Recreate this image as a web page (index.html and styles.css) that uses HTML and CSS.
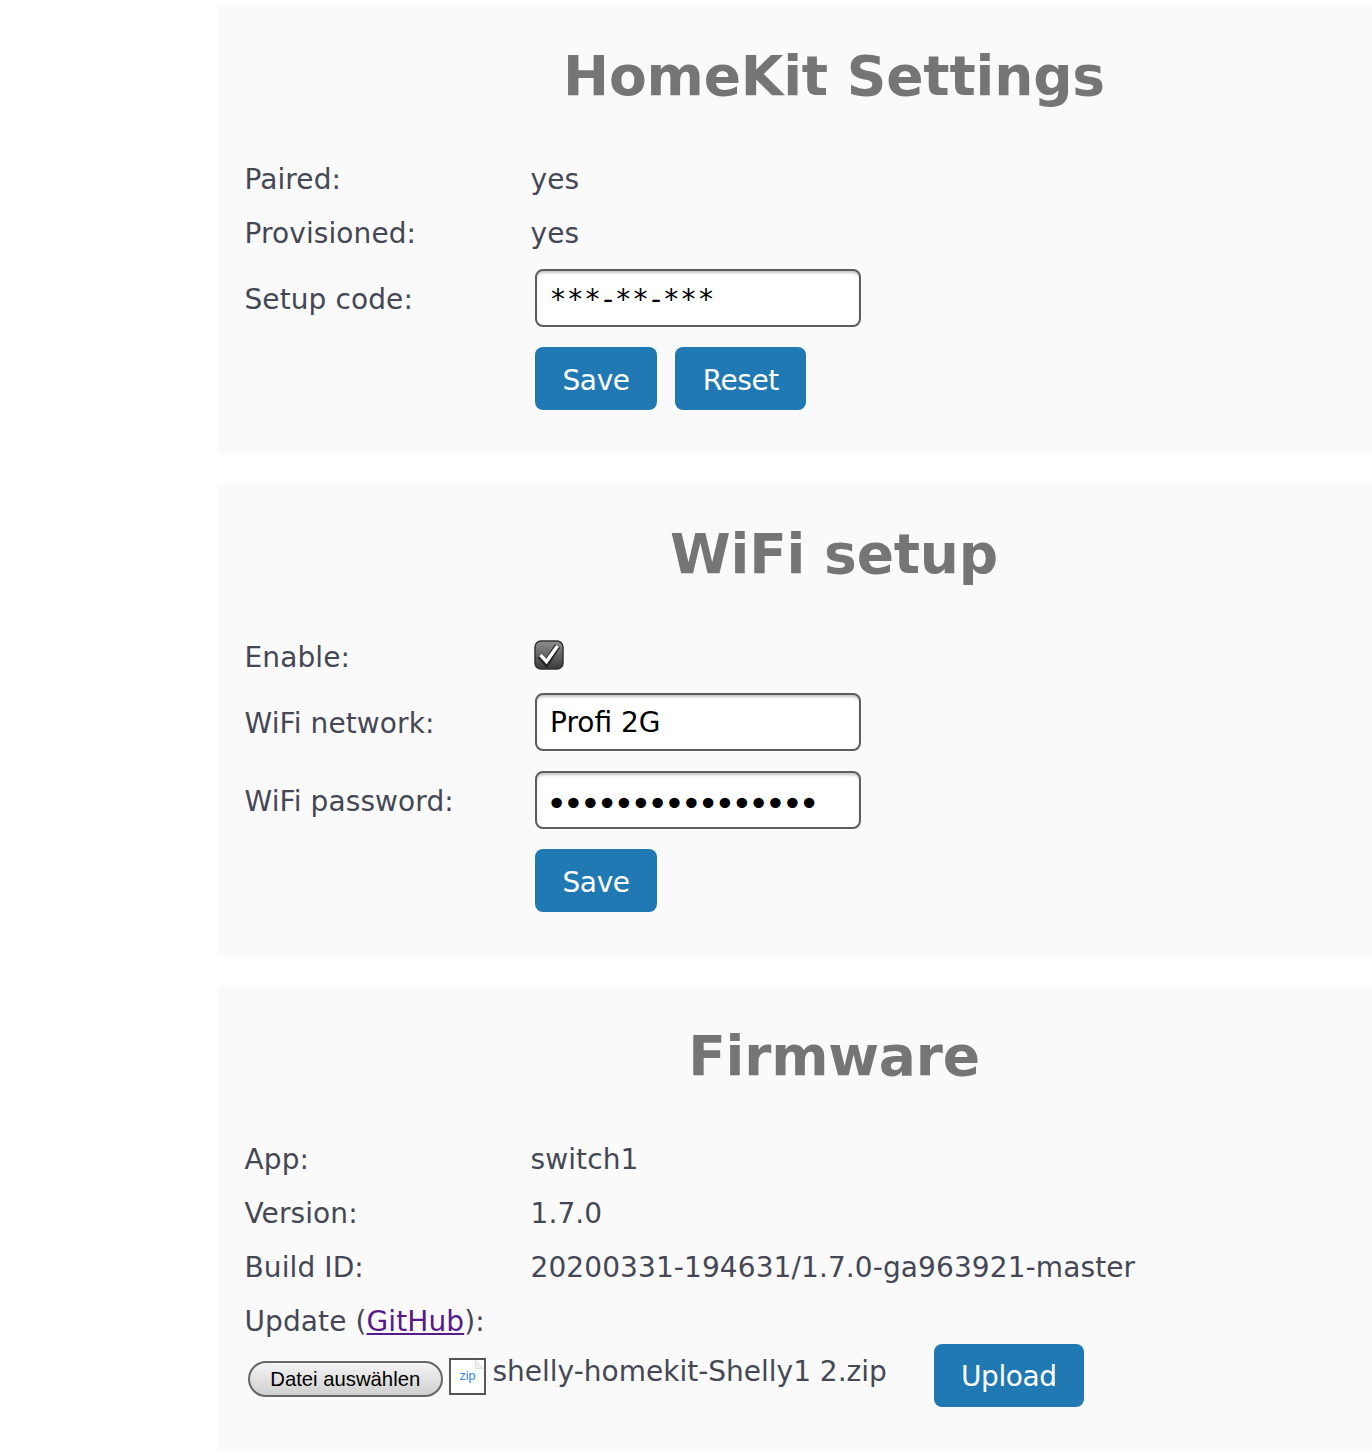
FILE: index.html
```html
<!DOCTYPE html>
<html lang="de">
<head>
<meta charset="utf-8">
<title>Shelly HomeKit</title>
<link rel="stylesheet" href="styles.css">
</head>
<body>
<main class="page">
  <section class="panel panel-homekit">
    <h1>HomeKit Settings</h1>
    <div class="row"><span class="label">Paired:</span><span class="value">yes</span></div>
    <div class="row"><span class="label">Provisioned:</span><span class="value">yes</span></div>
    <div class="row row-input"><span class="label">Setup code:</span><input class="field field-code" type="text" value="***-**-***"></div>
    <div class="actions">
      <button class="btn btn-save" type="button">Save</button>
      <button class="btn btn-reset" type="button">Reset</button>
    </div>
  </section>
  <section class="panel panel-wifi">
    <h1>WiFi setup</h1>
    <div class="row row-check"><span class="label">Enable:</span>
      <svg class="check" width="30" height="30" viewBox="0 0 30 30" aria-hidden="true">
        <defs><linearGradient id="cg" x1="0" y1="0" x2="0" y2="1"><stop offset="0" stop-color="#8f8f8f"/><stop offset="1" stop-color="#3a3a3a"/></linearGradient></defs>
        <rect x="1" y="1" width="28" height="28" rx="6" fill="url(#cg)" stroke="#333" stroke-width="1.5"/>
        <path d="M6 15.5 L12.5 23 L23.5 6" fill="none" stroke="#222" stroke-width="6"/>
        <path d="M6.5 15 L12.5 21.5 L23.5 6" fill="none" stroke="#fff" stroke-width="3.5"/>
      </svg>
    </div>
    <div class="row row-input"><span class="label">WiFi network:</span><input class="field" type="text" value="Profi 2G"></div>
    <div class="row row-input"><span class="label">WiFi password:</span><input class="field field-pass" type="password" value="abcdefghijklmnop"></div>
    <div class="actions">
      <button class="btn btn-save" type="button">Save</button>
    </div>
  </section>
  <section class="panel panel-firmware">
    <h1>Firmware</h1>
    <div class="row"><span class="label">App:</span><span class="value">switch1</span></div>
    <div class="row"><span class="label">Version:</span><span class="value">1.7.0</span></div>
    <div class="row"><span class="label">Build ID:</span><span class="value">20200331-194631/1.7.0-ga963921-master</span></div>
    <div class="row row-update"><span class="label">Update (<a href="#">GitHub</a>):</span></div>
    <div class="upload">
      <button class="file-btn" type="button">Datei auswählen</button>
      <svg class="zip" width="37" height="37" viewBox="0 0 38 38" aria-hidden="true">
        <path d="M1 1 H37 V37 H1 Z" fill="#fff" stroke="#555" stroke-width="2"/>
        <path d="M27 2 L36 11 H27 Z" fill="#eee" stroke="#ddd" stroke-width="1"/>
        <text x="19" y="23" text-anchor="middle" class="zip-text">zip</text>
      </svg>
      <span class="file-name">shelly-homekit-Shelly1 2.zip</span>
      <button class="btn btn-upload" type="button">Upload</button>
    </div>
  </section>
</main>
</body>
</html>
```
FILE: styles.css
```css
html, body {
  margin: 0;
  padding: 0;
  background: #fff;
  overflow: hidden;
  height: 1452px;
}
body {
  font-family: "DejaVu Sans", Verdana, sans-serif;
  font-size: 28px;
  letter-spacing: 0.1px;
  color: #454854;
}
.page {
  width: 1234px;
  margin-left: 217px;
  padding-top: 5px;
  display: flex;
  flex-direction: column;
  gap: 28px;
}
.panel {
  background: #fafafa;
  padding: 0 27.5px;
  box-sizing: border-box;
}
.panel-homekit { height: 450px; }
.panel-wifi { height: 474px; }
.panel-firmware { height: 467px; }
h1 {
  margin: 0;
  padding-top: 35px;
  height: 147px;
  box-sizing: border-box;
  font-size: 55px;
  line-height: 72px;
  letter-spacing: -0.2px;
  font-weight: 700;
  color: #757575;
  text-align: center;
}
.row {
  display: flex;
  align-items: center;
  height: 54px;
}
.label { width: 286px; flex: none; }
a { color: #551a8b; }
.row-input { height: 78px; }
.row-update { padding-top: 1px; height: 53px; margin-bottom: 1px; }
.field {
  box-sizing: border-box;
  width: 326px;
  height: 58px;
  margin: -3px 0 0 4.5px;
  padding: 2px 13px 0;
  font: inherit;
  color: #000;
  background: #fff;
  border: 2px solid #5d5d5d;
  border-radius: 8px;
  box-shadow: inset 0 3px 3px -1px #c4c4c4;
  outline: none;
}
.field-code { padding: 4px 13px 0 14px; letter-spacing: 3.3px; }
.field-pass { font-size: 36px; letter-spacing: -4.4px; padding: 8px 0 0 9px; }
.check { margin: -4px 0 0 3px; }
.actions {
  display: flex;
  gap: 18px;
  margin-left: 290.5px;
  margin-top: 9px;
}
.btn {
  height: 63px;
  padding: 3px 27.5px 0;
  font: inherit;
  letter-spacing: -0.4px;
  color: #fff;
  background: #2179b4;
  border: none;
  border-radius: 8px;
}
.upload {
  display: flex;
  align-items: center;
  height: 70px;
  margin-top: -9px;
}
.file-btn {
  box-sizing: border-box;
  width: 194.5px;
  height: 36px;
  margin: 7px 6px 0 3.5px;
  padding: 1px 0 0;
  font-family: "Liberation Sans", Arial, sans-serif;
  font-size: 20.3px;
  color: #000;
  background: linear-gradient(#f4f4f4, #cfcfcf);
  border: 2px solid #666;
  border-radius: 19px;
}
.zip { margin-top: 2px; }
.zip-text { font-family: "Liberation Sans", Arial, sans-serif; font-size: 13px; letter-spacing: 0; fill: #2f86e8; }
.file-name { margin-left: 7px; margin-top: -8px; width: 441px; flex: none; letter-spacing: 0; }
```
